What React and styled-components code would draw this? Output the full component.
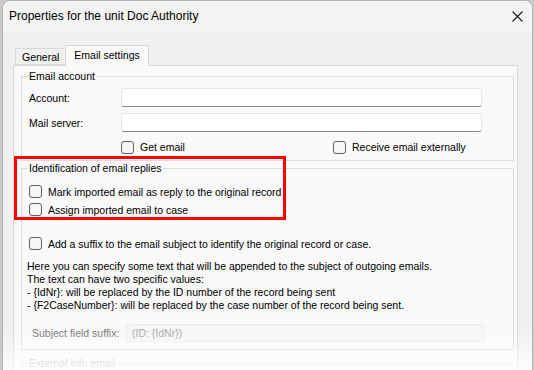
import React from 'react';
import styled, { createGlobalStyle } from 'styled-components';

const GlobalStyle = createGlobalStyle`
  html, body {
    margin: 0;
    padding: 0;
    background: #c9c9c9;
    overflow: hidden;
  }
  body {
    font-family: "Liberation Sans", Arial, sans-serif;
  }
`;

const Window = styled.div`
  position: relative;
  margin-left: 2px;
  width: 529px;
  height: 369px;
  border: 1px solid #b4b4b4;
  border-bottom: none;
  border-radius: 8px 8px 0 0;
  background: #f0f0f0;
  overflow: hidden;
`;

const TitleBar = styled.div`
  height: 30px;
  display: flex;
  align-items: center;
  justify-content: space-between;
  padding: 0 9px 1px 6px;
  background: #f3f3f3;
  font-size: 12px;
  color: #000;
`;

const CloseButton = styled.div`
  width: 12px;
  height: 12px;
  display: flex;
  align-items: center;
  justify-content: center;
`;

const Body = styled.div`
  padding: 13px 14px 0 10px;
  font-size: 10.5px;
  color: #000;
`;

const TabRow = styled.div`
  display: flex;
  align-items: flex-end;
  margin-left: 2px;
  position: relative;
  z-index: 1;
`;

const Tab = styled.div`
  box-sizing: border-box;
  height: ${(p) => (p.$active ? '21px' : '17px')};
  padding: ${(p) => (p.$active ? '3px 8px 0' : '2px 6px 0')};
  margin-bottom: ${(p) => (p.$active ? '-1px' : '0')};
  background: ${(p) => (p.$active ? '#f9f9f9' : '#f0f0f0')};
  border: 1px solid #d9d9d9;
  border-bottom: ${(p) => (p.$active ? 'none' : '1px solid #d9d9d9')};
  border-right: ${(p) => (p.$active ? '1px solid #d9d9d9' : 'none')};
  white-space: nowrap;
`;

const Panel = styled.div`
  background: #f9f9f9;
  border: 1px solid #d9d9d9;
  padding: 3px 3px 0 7px;
  height: 320px;
`;

const Section = styled.div`
  position: relative;
  margin-top: ${(p) => p.$gap || 0}px;
`;

const Group = styled.fieldset`
  margin: 0;
  padding: ${(p) => p.$pad || '0'};
  border: 1px solid #dcdcdc;
  min-width: 0;
  height: ${(p) => (p.$height ? `${p.$height}px` : 'auto')};
  box-sizing: border-box;
`;

const Legend = styled.legend`
  margin-left: 6px;
  padding: 0 1px;
  line-height: 14px;
  color: ${(p) => (p.$disabled ? '#a9a9a9' : '#000')};
`;

const FormGrid = styled.div`
  display: grid;
  grid-template-columns: 92px 361px;
  grid-auto-rows: 19px;
  row-gap: 6px;
  align-items: center;
  padding: 5px 0 3px 7px;
`;

const Label = styled.div`
  color: ${(p) => (p.$disabled ? '#6f6f6f' : '#000')};
`;

const TextInput = styled.div`
  box-sizing: border-box;
  height: ${(p) => (p.$disabled ? '18px' : '19px')};
  background: ${(p) => (p.$disabled ? '#f5f5f5' : '#fff')};
  border: 1px solid ${(p) => (p.$disabled ? '#ececec' : '#e6e6e6')};
  border-bottom-color: ${(p) => (p.$disabled ? '#ececec' : '#8a8a8a')};
  border-radius: 3px;
  padding: 0 5px;
  display: flex;
  align-items: center;
  color: #a3a3a3;
`;

const CheckLine = styled.div`
  display: flex;
  align-items: center;
  height: 13px;
  width: ${(p) => (p.$width ? `${p.$width}px` : 'auto')};
  margin-top: ${(p) => p.$top || 0}px;
`;

const Box = styled.span`
  box-sizing: border-box;
  width: 13px;
  height: 13px;
  border: 1px solid #5f5f5f;
  border-radius: 3px;
  background: #f6f6f6;
  margin-right: 6px;
  flex-shrink: 0;
`;

const CheckPair = styled.div`
  grid-column: 2;
  display: flex;
  align-items: center;
  margin-top: -1px;
`;

const Checks = styled.div`
  padding: 10px 0 0 7px;
`;

const Info = styled.div`
  margin: 10px 0 0 5px;
  line-height: 13px;
`;

const SuffixRow = styled.div`
  display: grid;
  grid-template-columns: 94px 359px;
  align-items: center;
  margin: 12px 0 0 10px;
`;

const RedMark = styled.div`
  position: absolute;
  left: -7px;
  top: -5px;
  width: 272px;
  height: 64px;
  box-sizing: border-box;
  border: 3px solid #ff0000;
  pointer-events: none;
`;

const Fade = styled.div`
  position: absolute;
  left: 0;
  right: 0;
  bottom: 0;
  height: 42px;
  background: linear-gradient(rgba(255, 255, 255, 0), rgba(255, 255, 255, 0.8));
  pointer-events: none;
`;

function Check({ children, width, top }) {
  return (
    <CheckLine $width={width} $top={top}>
      <Box />
      {children}
    </CheckLine>
  );
}

export default function App() {
  return (
    <>
      <GlobalStyle />
      <Window>
        <TitleBar>
          Properties for the unit Doc Authority
          <CloseButton>
            <svg width="11" height="11" viewBox="0 0 11 11">
              <path d="M0.5 0.5 L10.5 10.5 M10.5 0.5 L0.5 10.5" stroke="#1a1a1a" strokeWidth="1.1" />
            </svg>
          </CloseButton>
        </TitleBar>
        <Body>
          <TabRow>
            <Tab>General</Tab>
            <Tab $active>Email settings</Tab>
          </TabRow>
          <Panel>
            <Section>
              <Group>
                <Legend>Email account</Legend>
                <FormGrid>
                  <Label>Account:</Label>
                  <TextInput />
                  <Label>Mail server:</Label>
                  <TextInput />
                  <CheckPair>
                    <Check width={212}>Get email</Check>
                    <Check>Receive email externally</Check>
                  </CheckPair>
                </FormGrid>
              </Group>
            </Section>

            <Section>
              <Group $pad="0 0 7px 0">
                <Legend>Identification of email replies</Legend>
                <Checks>
                  <Check>Mark imported email as reply to the original record</Check>
                  <Check top={5}>Assign imported email to case</Check>
                  <Check top={21}>Add a suffix to the email subject to identify the original record or case.</Check>
                </Checks>
                <Info>
                  Here you can specify some text that will be appended to the subject of outgoing emails.
                  <br />
                  The text can have two specific values:
                  <br />
                  - {'{IdNr}'}: will be replaced by the ID number of the record being sent
                  <br />
                  - {'{F2CaseNumber}'}: will be replaced by the case number of the record being sent.
                </Info>
                <SuffixRow>
                  <Label $disabled>Subject field suffix:</Label>
                  <TextInput $disabled>(ID: {'{IdNr}'})</TextInput>
                </SuffixRow>
              </Group>
              <RedMark />
            </Section>

            <Section $gap={6}>
              <Group $height={60}>
                <Legend $disabled>External info email</Legend>
              </Group>
            </Section>
          </Panel>
        </Body>
        <Fade />
      </Window>
    </>
  );
}
